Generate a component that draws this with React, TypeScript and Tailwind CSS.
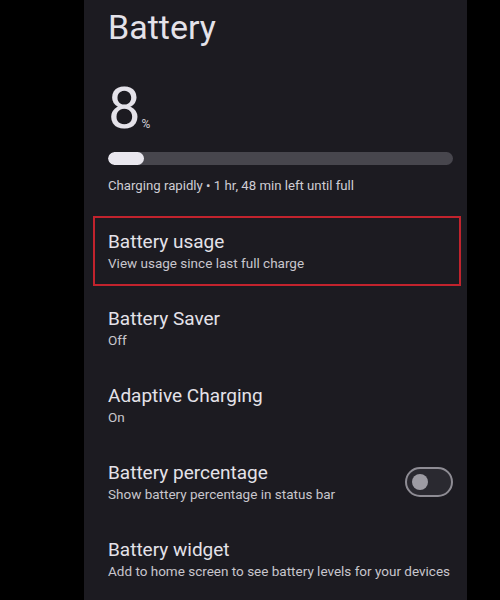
import React from 'react';

type Item = {
  title: string;
  sub: string;
  toggle?: boolean;
  highlight?: boolean;
};

const items: Item[] = [
  { title: 'Battery usage', sub: 'View usage since last full charge', highlight: true },
  { title: 'Battery Saver', sub: 'Off' },
  { title: 'Adaptive Charging', sub: 'On' },
  { title: 'Battery percentage', sub: 'Show battery percentage in status bar', toggle: true },
  { title: 'Battery widget', sub: 'Add to home screen to see battery levels for your devices' },
];

function Toggle() {
  return (
    <div className="w-[48px] h-[30px] rounded-full border-2 border-[#8e8c94] bg-[#2a2930] flex items-center pl-[5px]">
      <div className="w-[16px] h-[16px] rounded-full bg-[#9d9ba3]" />
    </div>
  );
}

export default function App() {
  return (
    <div className="w-[500px] h-[600px] bg-black overflow-hidden" style={{ fontFamily: 'Roboto, "Open Sans", sans-serif' }}>
      <div className="ml-[84px] w-[383px] h-[600px] bg-[#1c1b21] text-[#e4e2e9]">
        {/* header */}
        <div className="h-[212px] pl-[24px] pr-[14px] pt-[7px]">
          <h1 className="text-[34px] leading-[40px]">Battery</h1>
          <div className="mt-[32px] flex items-baseline">
            <span className="text-[58px] leading-[58px]">8</span>
            <span className="text-[12px] ml-[1px] text-[#d0ced5]">%</span>
          </div>
          <div className="mt-[15px] h-[13px] rounded-full bg-[#47464d] overflow-hidden">
            <div className="h-full w-[36px] rounded-full bg-[#e9e7ee]" />
          </div>
          <p className="mt-[12px] text-[13.2px] leading-[18px] text-[#cfcdd4]">
            Charging rapidly • 1 hr, 48 min left until full
          </p>
        </div>

        {/* settings list */}
        <div>
          {items.map((item) => (
            <div key={item.title} className="h-[77px] flex items-center pl-[9px] pr-[6px]">
              <div
                className={`flex-1 h-[70px] flex items-center pl-[13px] pr-[6px] border-2 ${
                  item.highlight ? 'border-[#c1232d]' : 'border-transparent'
                }`}
              >
                <div className="flex-1">
                  <div className="text-[19px] leading-[24px] text-[#e4e2e9]">{item.title}</div>
                  <div className="text-[13.5px] leading-[18px] text-[#c8c6cd]">{item.sub}</div>
                </div>
                {item.toggle && <Toggle />}
              </div>
            </div>
          ))}
        </div>
      </div>
    </div>
  );
}
